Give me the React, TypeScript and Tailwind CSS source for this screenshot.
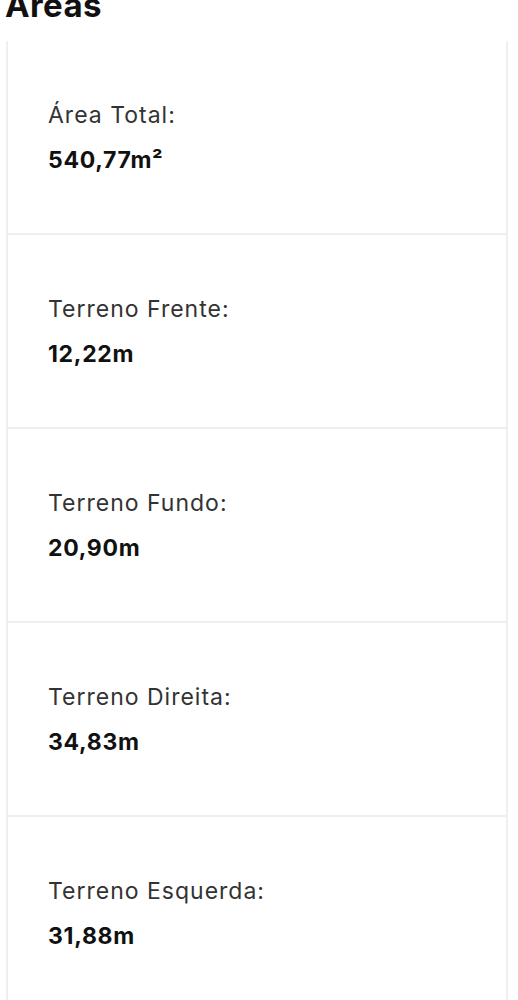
const areas = [
  { label: "Área Total:", value: "540,77m²" },
  { label: "Terreno Frente:", value: "12,22m" },
  { label: "Terreno Fundo:", value: "20,90m" },
  { label: "Terreno Direita:", value: "34,83m" },
  { label: "Terreno Esquerda:", value: "31,88m" },
];

export default function App() {
  return (
    <div className="bg-white min-h-screen overflow-hidden font-['Inter',sans-serif] text-[#111]">
      <h2 className="-mt-[14px] pl-[5px] text-[33px] font-bold leading-[38px] tracking-[0.4px]">Áreas</h2>

      <div className="mx-[6px] mt-[17px] w-[502px]">
        {areas.map((item) => (
          <div
            key={item.label}
            className="flex h-[194px] flex-col justify-center border-x-2 border-b-2 border-[#efefef] pl-[40px]"
          >
            <p className="text-[23px] leading-[26px] tracking-[1px] text-[#333]">{item.label}</p>
            <p className="mt-[19px] text-[23px] font-bold leading-[26px] tracking-[0.7px] text-[#111]">{item.value}</p>
          </div>
        ))}
      </div>
    </div>
  );
}
